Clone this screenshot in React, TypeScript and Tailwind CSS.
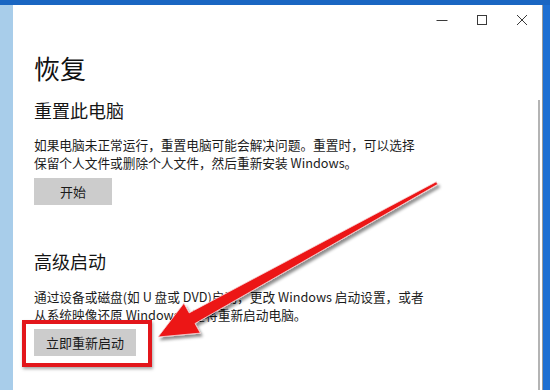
import React from "react";

const font = { fontFamily: '"Noto Sans CJK SC", "Noto Sans", sans-serif' };

function WindowControls() {
	return (
		<div className="flex h-[30px] flex-row items-center justify-end">
			<div className="flex h-[30px] w-[40px] items-center justify-center">
				<svg width="12" height="12" viewBox="0 0 12 12">
					<line x1="0.5" y1="6.5" x2="11.5" y2="6.5" stroke="#3a3a3a" strokeWidth="1" />
				</svg>
			</div>
			<div className="flex h-[30px] w-[40px] items-center justify-center">
				<svg width="12" height="12" viewBox="0 0 12 12">
					<rect x="1.5" y="1.5" width="9" height="9" fill="none" stroke="#3a3a3a" strokeWidth="1" />
				</svg>
			</div>
			<div className="flex h-[30px] w-[40px] items-center justify-center">
				<svg width="12" height="12" viewBox="0 0 12 12">
					<path d="M1 1 L11 11 M11 1 L1 11" stroke="#3a3a3a" strokeWidth="1" />
				</svg>
			</div>
		</div>
	);
}

function RedArrow() {
	// tail (437,183) -> tip (158,337)
	const pts = "158,337 200.3,333.1 195,323.5 437.7,184.3 436.3,181.7 189.2,312.9 183.9,303.3";
	return (
		<svg className="pointer-events-none absolute left-0 top-0" width="550" height="390" viewBox="0 0 550 390">
			<defs>
				<filter id="arrowShadow" x="-10%" y="-10%" width="120%" height="130%">
					<feDropShadow dx="2" dy="3" stdDeviation="1.6" floodColor="#000" floodOpacity="0.45" />
				</filter>
			</defs>
			<polygon points={pts} fill="#ec1519" stroke="#f7d6d6" strokeWidth="0.8" strokeLinejoin="miter" filter="url(#arrowShadow)" />
		</svg>
	);
}

export default function App() {
	return (
		<div className="relative h-[390px] w-[550px] overflow-hidden bg-[#1c6ccc]" style={font}>
			<div className="flex h-full flex-col">
				<div className="h-[5px] bg-[#1a66c2]" />
				<div className="flex min-h-0 flex-1 flex-row">
					<div className="w-[13px] bg-[#a8cdea]" />
					<div className="relative flex w-[530px] flex-col border-r border-[#9a9a9a] bg-white">
						<WindowControls />
						<div className="flex flex-col pl-[21px] text-[#1b1b1b]">
							<h1 className="mt-[16px] text-[26px] leading-[34px] font-normal text-[#111]">恢复</h1>
							<h2 className="mt-[13px] text-[18px] leading-[24px] font-normal text-[#151515]">重置此电脑</h2>
							<p className="mt-[14px] whitespace-nowrap text-[12.7px] leading-[18px]">
								如果电脑未正常运行，重置电脑可能会解决问题。重置时，可以选择
								<br />
								保留个人文件或删除个人文件，然后重新安装 Windows。
							</p>
							<button type="button" className="mt-[6px] flex h-[27px] w-[78px] items-center justify-center bg-[#cccccc] text-[13px] text-[#1a1a1a]">
								开始
							</button>
							<h2 className="mt-[44px] text-[18px] leading-[24px] font-normal text-[#151515]">高级启动</h2>
							<p className="mt-[15px] whitespace-nowrap text-[12.7px] leading-[18px]">
								通过设备或磁盘(如 U 盘或 DVD)启动，更改 Windows 启动设置，或者
								<br />
								从系统映像还原 Windows。这将重新启动电脑。
							</p>
							<button type="button" className="mt-[5px] flex h-[27px] w-[102px] items-center justify-center bg-[#cccccc] text-[13px] text-[#1a1a1a]">
								立即重新启动
							</button>
						</div>
						<div className="absolute right-[2px] top-[95px] bottom-0 w-[2px] bg-[#b4b4b4]" />
					</div>
					<div className="flex-1 bg-[#1d6fd2]" />
				</div>
			</div>
			<div className="pointer-events-none absolute left-[22px] top-[320px] h-[47px] w-[130px] border-[4px] border-[#e3161b] shadow-[1px_2px_3px_rgba(0,0,0,0.35)]" />
			<RedArrow />
		</div>
	);
}
